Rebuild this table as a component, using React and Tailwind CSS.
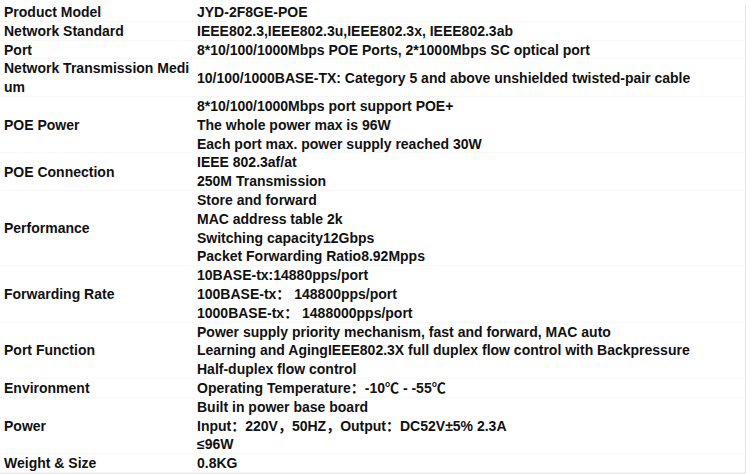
const rows = [
  { label: ['Product Model'], value: ['JYD-2F8GE-POE'] },
  { label: ['Network Standard'], value: ['IEEE802.3,IEEE802.3u,IEEE802.3x, IEEE802.3ab'] },
  { label: ['Port'], value: ['8*10/100/1000Mbps POE Ports, 2*1000Mbps SC optical port'] },
  { label: ['Network Transmission Medi', 'um'], value: ['10/100/1000BASE-TX: Category 5 and above unshielded twisted-pair cable'] },
  {
    label: ['POE Power'],
    value: ['8*10/100/1000Mbps port support POE+', 'The whole power max is 96W', 'Each port max. power supply reached 30W'],
  },
  { label: ['POE Connection'], value: ['IEEE 802.3af/at', '250M Transmission'] },
  {
    label: ['Performance'],
    value: ['Store and forward', 'MAC address table 2k', 'Switching capacity12Gbps', 'Packet Forwarding Ratio8.92Mpps'],
  },
  {
    label: ['Forwarding Rate'],
    value: ['10BASE-tx:14880pps/port', '100BASE-tx： 148800pps/port', '1000BASE-tx： 1488000pps/port'],
  },
  {
    label: ['Port Function'],
    value: [
      'Power supply priority mechanism, fast and forward, MAC auto',
      'Learning and AgingIEEE802.3X full duplex flow control with Backpressure',
      'Half-duplex flow control',
    ],
  },
  { label: ['Environment'], value: ['Operating Temperature：-10℃ - -55℃'] },
  { label: ['Power'], value: ['Built in power base board', 'Input：220V，50HZ，Output：DC52V±5% 2.3A', '≤96W'] },
  { label: ['Weight & Size'], value: ['0.8KG'] },
]

export default function App() {
  return (
    <div className="w-[750px] h-[474px] bg-white overflow-hidden pt-[3px]">
      <div
        className="w-[746px] border-r border-b border-[#e6e6e6] text-[14px] leading-[18.8px] font-bold text-[#111]"
        style={{ fontFamily: '"Liberation Sans", Arial, "Noto Sans CJK SC", sans-serif' }}
      >
        {rows.map((row) => (
          <div key={row.label[0]} className="flex shadow-[inset_0_-1px_0_#f7f7f7]">
            <div className="w-[197px] shrink-0 pl-[4px] flex flex-col justify-center">
              {row.label.map((l) => (
                <span key={l}>{l}</span>
              ))}
            </div>
            <div className="flex-1 flex flex-col justify-center">
              {row.value.map((v) => (
                <span key={v}>{v}</span>
              ))}
            </div>
          </div>
        ))}
      </div>
    </div>
  )
}
